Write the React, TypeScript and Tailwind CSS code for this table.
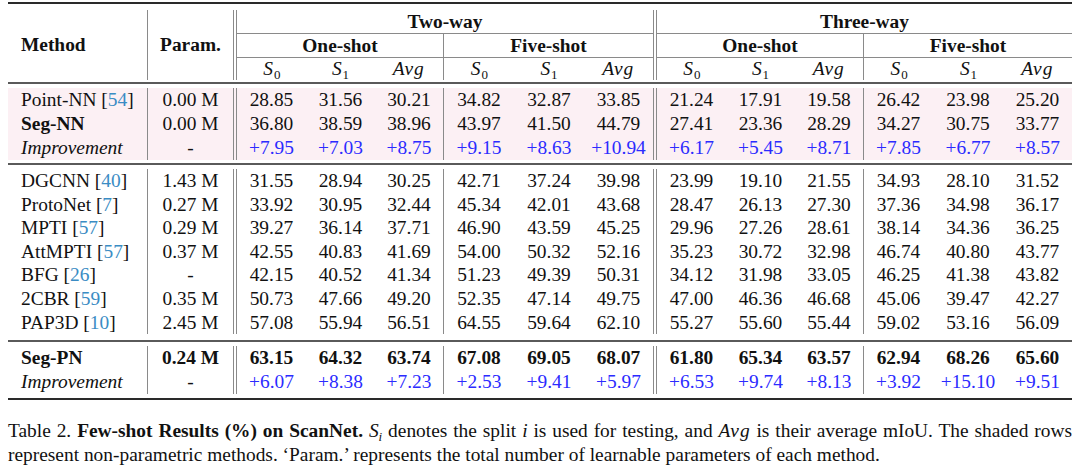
import type { ReactNode } from "react";

type Row = {
  method?: string;
  cite?: string;
  param?: string;
  bold?: boolean;
  boldAll?: boolean;
  imp?: boolean;
  vals: string[];
};

const shaded: Row[] = [
  { method: "Point-NN", cite: "54", param: "0.00 M", vals: ["28.85", "31.56", "30.21", "34.82", "32.87", "33.85", "21.24", "17.91", "19.58", "26.42", "23.98", "25.20"] },
  { method: "Seg-NN", bold: true, param: "0.00 M", vals: ["36.80", "38.59", "38.96", "43.97", "41.50", "44.79", "27.41", "23.36", "28.29", "34.27", "30.75", "33.77"] },
  { imp: true, vals: ["+7.95", "+7.03", "+8.75", "+9.15", "+8.63", "+10.94", "+6.17", "+5.45", "+8.71", "+7.85", "+6.77", "+8.57"] },
];

const body: Row[] = [
  { method: "DGCNN", cite: "40", param: "1.43 M", vals: ["31.55", "28.94", "30.25", "42.71", "37.24", "39.98", "23.99", "19.10", "21.55", "34.93", "28.10", "31.52"] },
  { method: "ProtoNet", cite: "7", param: "0.27 M", vals: ["33.92", "30.95", "32.44", "45.34", "42.01", "43.68", "28.47", "26.13", "27.30", "37.36", "34.98", "36.17"] },
  { method: "MPTI", cite: "57", param: "0.29 M", vals: ["39.27", "36.14", "37.71", "46.90", "43.59", "45.25", "29.96", "27.26", "28.61", "38.14", "34.36", "36.25"] },
  { method: "AttMPTI", cite: "57", param: "0.37 M", vals: ["42.55", "40.83", "41.69", "54.00", "50.32", "52.16", "35.23", "30.72", "32.98", "46.74", "40.80", "43.77"] },
  { method: "BFG", cite: "26", param: "-", vals: ["42.15", "40.52", "41.34", "51.23", "49.39", "50.31", "34.12", "31.98", "33.05", "46.25", "41.38", "43.82"] },
  { method: "2CBR", cite: "59", param: "0.35 M", vals: ["50.73", "47.66", "49.20", "52.35", "47.14", "49.75", "47.00", "46.36", "46.68", "45.06", "39.47", "42.27"] },
  { method: "PAP3D", cite: "10", param: "2.45 M", vals: ["57.08", "55.94", "56.51", "64.55", "59.64", "62.10", "55.27", "55.60", "55.44", "59.02", "53.16", "56.09"] },
];

const ours: Row[] = [
  { method: "Seg-PN", boldAll: true, param: "0.24 M", vals: ["63.15", "64.32", "63.74", "67.08", "69.05", "68.07", "61.80", "65.34", "63.57", "62.94", "68.26", "65.60"] },
  { imp: true, vals: ["+6.07", "+8.38", "+7.23", "+2.53", "+9.41", "+5.97", "+6.53", "+9.74", "+8.13", "+3.92", "+15.10", "+9.51"] },
];

// column widths, separators drawn as right borders
const cellCls = [
  "w-[69px]", "w-[69px]", "w-[69px] border-r border-[#8a8a8a]",
  "w-[70px]", "w-[70px]", "w-[73px] border-r-4 border-double border-[#8a8a8a]",
  "w-[69px]", "w-[69px]", "w-[69px] border-r border-[#8a8a8a]",
  "w-[69px]", "w-[70px]", "w-[69px]",
];

function Sub({ n }: { n: string }) {
  return (
    <span>
      <span className="italic">S</span>
      <span className="text-[13px] relative top-[4px] left-[1px]">{n}</span>
    </span>
  );
}

function Avg() {
  return <span className="italic tracking-[1px]">Avg</span>;
}

function TableRow({ r, h }: { r: Row; h: string }) {
  return (
    <div className={`flex ${h}`}>
      <div className="w-[140px] border-r border-[#8a8a8a] pl-[13px] flex items-center">
        {r.imp ? (
          <span className="italic">Improvement</span>
        ) : (
          <span className={r.bold || r.boldAll ? "font-bold" : ""}>
            {r.method}
            {r.cite && (
              <>
                {" "}[<span className="text-[#3a8cc4]">{r.cite}</span>]
              </>
            )}
          </span>
        )}
      </div>
      <div className={`w-[89px] border-r-4 border-double border-[#8a8a8a] flex items-center justify-center ${r.boldAll ? "font-bold" : ""}`}>
        {r.imp ? "-" : r.param}
      </div>
      {r.vals.map((v, i) => (
        <div
          key={i}
          className={`${cellCls[i]} flex items-center justify-center ${r.imp ? "text-[#2b2bff]" : ""} ${r.boldAll ? "font-bold" : ""}`}
        >
          {v}
        </div>
      ))}
    </div>
  );
}

function SplitHead({ title, w, split }: { title: string; w: string; split: boolean }) {
  return (
    <div className={`${w} flex flex-col ${split ? "border-r border-[#8a8a8a]" : ""}`}>
      <div className="h-[23px] flex items-center justify-center font-bold">{title}</div>
      <div className="h-px bg-[#8a8a8a]" />
      <div className="flex flex-1">
        <div className="flex-1 flex items-center justify-center"><Sub n="0" /></div>
        <div className="flex-1 flex items-center justify-center"><Sub n="1" /></div>
        <div className="flex-1 flex items-center justify-center"><Avg /></div>
      </div>
    </div>
  );
}

function WayHead({ title, w, dbl, children }: { title: string; w: string; dbl: boolean; children: ReactNode }) {
  return (
    <div className={`${w} flex flex-col ${dbl ? "border-r-4 border-double border-[#8a8a8a]" : ""}`}>
      <div className="h-[23px] flex items-center justify-center font-bold">{title}</div>
      <div className="h-px bg-[#8a8a8a]" />
      <div className="flex flex-1">{children}</div>
    </div>
  );
}

export default function App() {
  return (
    <div className="w-[1080px] h-[469px] bg-white text-[#111] text-[19.4px] leading-none font-['Liberation_Serif',serif] overflow-hidden">
      <div className="ml-[8px] w-[1064px] pt-[2px]">
        <div className="h-[2px] bg-[#2a2a2a]" />

        {/* header */}
        <div className="mt-[6px] h-[70px] flex">
          <div className="w-[140px] border-r border-[#8a8a8a] pl-[13px] flex items-center font-bold">Method</div>
          <div className="w-[89px] border-r-4 border-double border-[#8a8a8a] flex items-center justify-center font-bold">Param.</div>
          <WayHead title="Two-way" w="w-[420px]" dbl>
            <SplitHead title="One-shot" w="w-[207px]" split />
            <SplitHead title="Five-shot" w="w-[209px]" split={false} />
          </WayHead>
          <WayHead title="Three-way" w="w-[415px]" dbl={false}>
            <SplitHead title="One-shot" w="w-[207px]" split />
            <SplitHead title="Five-shot" w="w-[208px]" split={false} />
          </WayHead>
        </div>
        <div className="mt-[2px] h-[2px] bg-[#5a5a5a]" />

        {/* non-parametric rows */}
        <div className="mt-[4px] bg-[#fcf0f4]">
          {shaded.map((r, i) => (
            <TableRow key={i} r={r} h="h-[24px]" />
          ))}
        </div>
        <div className="mt-[3px] h-[2px] bg-[#5a5a5a]" />

        {/* parametric rows */}
        <div className="mt-[4px]">
          {body.map((r, i) => (
            <TableRow key={i} r={r} h="h-[23.6px]" />
          ))}
        </div>
        <div className="mt-[6px] h-[2px] bg-[#5a5a5a]" />

        {/* ours */}
        <div className="mt-[4px]">
          {ours.map((r, i) => (
            <TableRow key={i} r={r} h="h-[24px]" />
          ))}
        </div>
        <div className="mt-[4px] h-[2px] bg-[#2a2a2a]" />

        {/* caption */}
        <div className="mt-[20px] leading-[22px]">
          <div className="text-justify [text-align-last:justify]">
            Table 2. <span className="font-bold">Few-shot Results (%) on ScanNet.</span>{" "}
            <span className="italic">S</span>
            <span className="italic text-[13px] relative top-[4px]">i</span> denotes the split{" "}
            <span className="italic">i</span> is used for testing, and <Avg /> is their average mIoU. The shaded rows
          </div>
          <div>
            represent non-parametric methods. ‘Param.’ represents the total number of learnable parameters of each method.
          </div>
        </div>
      </div>
    </div>
  );
}
